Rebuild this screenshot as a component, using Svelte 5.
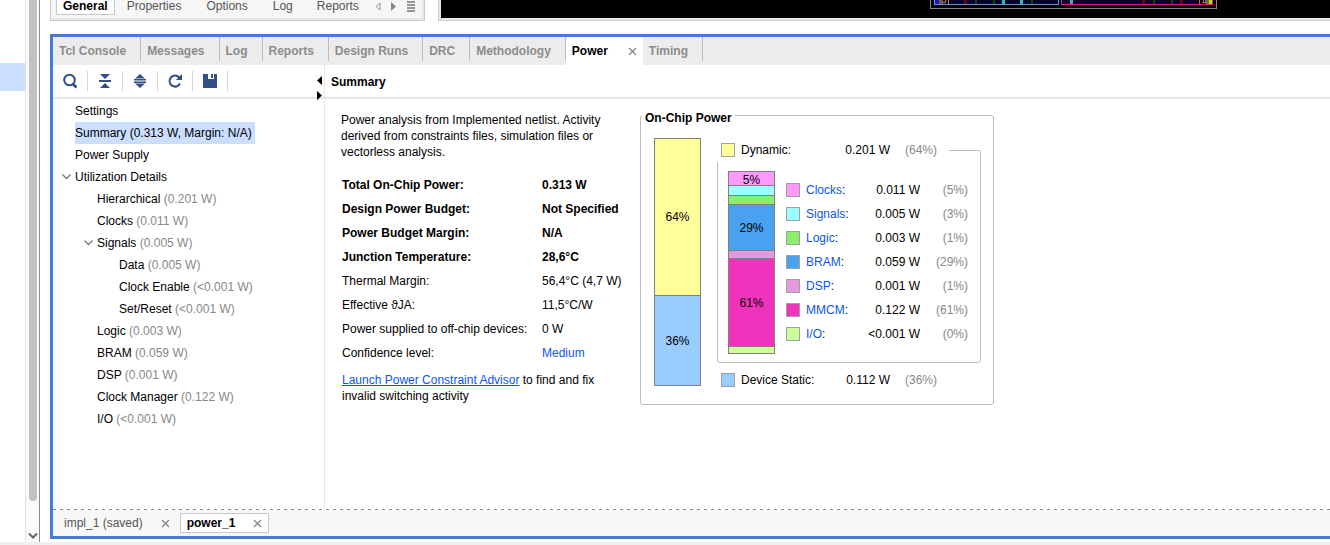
<script>
  const tabs = ['Tcl Console', 'Messages', 'Log', 'Reports', 'Design Runs', 'DRC', 'Methodology', 'Power', 'Timing'];
  const propTabs = ['Properties', 'Options', 'Log', 'Reports'];
  const tree = [
    { level: 0, name: 'Settings' },
    { level: 0, name: 'Summary (0.313 W, Margin: N/A)', selected: true },
    { level: 0, name: 'Power Supply' },
    { level: 0, name: 'Utilization Details', open: true },
    { level: 1, name: 'Hierarchical', value: '(0.201 W)' },
    { level: 1, name: 'Clocks', value: '(0.011 W)' },
    { level: 1, name: 'Signals', value: '(0.005 W)', open: true },
    { level: 2, name: 'Data', value: '(0.005 W)' },
    { level: 2, name: 'Clock Enable', value: '(<0.001 W)' },
    { level: 2, name: 'Set/Reset', value: '(<0.001 W)' },
    { level: 1, name: 'Logic', value: '(0.003 W)' },
    { level: 1, name: 'BRAM', value: '(0.059 W)' },
    { level: 1, name: 'DSP', value: '(0.001 W)' },
    { level: 1, name: 'Clock Manager', value: '(0.122 W)' },
    { level: 1, name: 'I/O', value: '(<0.001 W)' }
  ];
  const facts = [
    { label: 'Total On-Chip Power:', value: '0.313 W', bold: true },
    { label: 'Design Power Budget:', value: 'Not Specified', bold: true },
    { label: 'Power Budget Margin:', value: 'N/A', bold: true },
    { label: 'Junction Temperature:', value: '28,6°C', bold: true },
    { label: 'Thermal Margin:', value: '56,4°C (4,7 W)' },
    { label: 'Effective ϑJA:', value: '11,5°C/W' },
    { label: 'Power supplied to off-chip devices:', value: '0 W' },
    { label: 'Confidence level:', value: 'Medium', link: true }
  ];
  const totals = [
    { color: '#ffff99', label: '64%', size: 157 },
    { color: '#99ccff', label: '36%', size: 90 }
  ];
  const parts = [
    { name: 'Clocks', color: '#ff99ff', value: '0.011 W', pct: '(5%)', label: '5%', size: 14 },
    { name: 'Signals', color: '#99ffff', value: '0.005 W', pct: '(3%)', size: 10 },
    { name: 'Logic', color: '#8af06c', value: '0.003 W', pct: '(1%)', size: 9 },
    { name: 'BRAM', color: '#48a2f0', value: '0.059 W', pct: '(29%)', label: '29%', size: 46 },
    { name: 'DSP', color: '#e699dc', value: '0.001 W', pct: '(1%)', size: 8 },
    { name: 'MMCM', color: '#f033bd', value: '0.122 W', pct: '(61%)', label: '61%', size: 88 },
    { name: 'I/O', color: '#ccff99', value: '<0.001 W', pct: '(0%)', size: 7 }
  ];
</script>

{#snippet cross()}
  <svg width="9" height="9" viewBox="0 0 9 9"><path d="M1 1 8 8M8 1 1 8" stroke="#858585" stroke-width="1.3" fill="none" /></svg>
{/snippet}

<div class="page">
  <div class="work">
    <aside class="strip">
      <div class="strip-body"><div class="strip-row"></div></div>
      <div class="scroll">
        <div class="thumb"></div>
        <svg width="10" height="8" viewBox="0 0 10 8"><path d="M1 1.5 5 5.5 9 1.5" stroke="#666" stroke-width="2" fill="none" /></svg>
      </div>
    </aside>

    <main>
      <div class="upper">
        <nav class="props">
          <button class="prop active">General</button>
          {#each propTabs as t}<button class="prop">{t}</button>{/each}
          <span class="pager">
            <button aria-label="Previous"><svg width="6" height="9" viewBox="0 0 6 9"><path d="M5 1v7L1 4.500z" fill="none" stroke="#999" /></svg></button>
            <button aria-label="Next"><svg width="6" height="9" viewBox="0 0 6 9"><path d="M0 0v9L5 4.500z" fill="#858585" /></svg></button>
            <button aria-label="List"><svg width="8" height="11" viewBox="0 0 8 11"><path d="M0 1h8M0 4h8M0 7h8M0 10h8" stroke="#777" stroke-width="1.300" /></svg></button>
          </span>
        </nav>
        <div class="device">
          <svg width="290" height="9" viewBox="0 0 290 9" shape-rendering="crispEdges">
            <path d="M.5 0V8.500H286.500V0" fill="none" stroke="#888" />
            <path d="M4 0H129V5H4zM131 0H283V5H131z" fill="#04042c" />
            <path d="M5 0h4v4H5z" fill="#1818c8" /><path d="M9 0h4v4H9z" fill="#6b5848" />
            <path d="M12 2.500h3.500V0M18.500 0v4M269.500 0v4M273 2.500V0M272 2.500h3" fill="none" stroke="#b87820" />
            <path d="M34 0h3v4h-3zM212 0h3v4h-3zM250 0h3v4h-3z" fill="#5a0c1c" />
            <path d="M45 0h2v4h-2zM63 0h2v4h-2zM101 0h2v4h-2zM223 0h2v4h-2zM241 0h2v4h-2z" fill="#064a10" />
            <path d="M72 0h3v4h-3zM90 0h3v4h-3zM140 0h3v4h-3z" fill="#30b8c0" />
            <path d="M275 0h4v4h-4z" fill="#786838" /><path d="M279 0h3v4h-3z" fill="#90f020" />
            <path d="M4.500 0V4.500H128.500V0" fill="none" stroke="#6c8cd8" />
            <path d="M131.500 0V4.500H282.500V0" fill="none" stroke="#d8189c" />
          </svg>
        </div>
      </div>

      <section class="panel">
        <nav class="tabs">
          {#each tabs as t}
            <div class="tab" class:active={t === 'Power'}>
              <button>{t}</button>
              {#if t === 'Power'}<button class="close" aria-label="Close Power">{@render cross()}</button>{/if}
            </div>
          {/each}
        </nav>

        <div class="columns">
          <div class="side">
            <div class="tools">
              <button aria-label="Search"><svg width="16" height="16" viewBox="0 0 16 16"><circle cx="7.500" cy="7" r="5.300" fill="none" stroke="#324f86" stroke-width="2" /><path d="m11 11 3.500 3.500" stroke="#324f86" stroke-width="2.600" /></svg></button>
              <button aria-label="Collapse all"><svg width="16" height="16" viewBox="0 0 16 16"><path d="M3 1h10L8 6zM3 15h10L8 10zM2 7h12v2H2z" fill="#324f86" /></svg></button>
              <button aria-label="Expand all"><svg width="16" height="16" viewBox="0 0 16 16"><path d="M3 5.500 8 1l5 4.500zM3 10.500 8 15l5-4.500zM2 6h12v1.500H2zM2 8.500h12V10H2z" fill="#324f86" /></svg></button>
              <button aria-label="Refresh"><svg width="16" height="16" viewBox="0 0 16 16"><path d="M12.200 4.500A5.500 5.500 0 1 0 13 10.500" fill="none" stroke="#324f86" stroke-width="2" /><path d="M15 1v6H9z" fill="#324f86" /></svg></button>
              <button aria-label="Save"><svg width="16" height="16" viewBox="0 0 16 16"><path d="M1 1h5v5h6V1h3v14H1zM9 1h2v4H9z" fill="#324f86" /></svg></button>
              <div class="split">
                <svg width="6" height="24" viewBox="0 0 6 24"><path d="M5 0v9L0 4.500zM0 15v9l5-4.500z" fill="#000" /></svg>
              </div>
            </div>
            <ul class="tree">
              {#each tree as n}
                <li class="l{n.level}">
                  <span class="twist">{#if n.open}<svg width="9" height="6" viewBox="0 0 9 6"><path d="M.5.5l4 4 4-4" fill="none" stroke="#777" stroke-width="1.300" /></svg>{/if}</span>
                  <button class:selected={n.selected}>{n.name}{#if n.value}{' '}<span class="dim">{n.value}</span>{/if}</button>
                </li>
              {/each}
            </ul>
          </div>

          <div class="content">
            <h2>Summary</h2>
            <div class="report">
              <div class="text">
                <p>Power analysis from Implemented netlist. Activity derived from constraints files, simulation files or vectorless analysis.</p>
                <table class="facts">
                  <tbody>
                    {#each facts as f}
                      <tr class:bold={f.bold}><th scope="row">{f.label}</th><td>{#if f.link}<a class="plain" href="#confidence">{f.value}</a>{:else}{f.value}{/if}</td></tr>
                    {/each}
                  </tbody>
                </table>
                <p class="advice"><a href="#advisor">Launch Power Constraint Advisor</a> to find and fix<br />invalid switching activity</p>
              </div>

              <fieldset class="chip">
                <legend>On-Chip Power</legend>
                <div class="bar">
                  {#each totals as s}<div style="height:{s.size}px;background:{s.color}">{s.label}</div>{/each}
                </div>
                <div class="detail">
                  <fieldset class="dynamic">
                    <legend class="total"><i class="swatch" style="background:#ffff99"></i><span>Dynamic:</span><b>0.201 W</b><em>(64%)</em></legend>
                    <div class="bar">
                      {#each parts as s}<div style="height:{s.size}px;background:{s.color}">{s.label ?? ''}</div>{/each}
                    </div>
                    <table class="parts">
                      <tbody>
                        {#each parts as s}
                          <tr>
                            <td><i class="swatch" style="background:{s.color}"></i></td>
                            <th scope="row"><a class="plain" href="#{s.name}">{s.name}</a>:</th>
                            <td class="num">{s.value}</td>
                            <td class="pct">{s.pct}</td>
                          </tr>
                        {/each}
                      </tbody>
                    </table>
                  </fieldset>
                  <div class="total static"><i class="swatch" style="background:#99ccff"></i><span>Device Static:</span><b>0.112 W</b><em>(36%)</em></div>
                </div>
              </fieldset>
            </div>
          </div>
        </div>

        <svg class="dash" width="100%" height="1"><line x1="0" y1=".5" x2="100%" y2=".5" stroke="#888" stroke-dasharray="3 4" /></svg>
        <nav class="results">
          <div class="result"><button>impl_1 (saved)</button><button class="close" aria-label="Close impl_1">{@render cross()}</button></div>
          <div class="result active"><button>power_1</button><button class="close" aria-label="Close power_1">{@render cross()}</button></div>
        </nav>
      </section>
    </main>
  </div>
  <footer></footer>
</div>

<style>
  :global(body) { font: 12px/16px "Liberation Sans", Arial, sans-serif; color: #000; background: #fff; }
  .page, .page * { box-sizing: border-box; }
  .page { min-height: 100vh; display: flex; flex-direction: column; overflow: hidden; }
  button { font: inherit; color: inherit; background: none; border: 0; padding: 0; margin: 0; white-space: nowrap; }
  svg { display: block; flex: none; }
  p, h2, ul { margin: 0; padding: 0; }
  a { color: #0b55f0; }
  a.plain { text-decoration: none; }
  footer { height: 3px; background: #efefef; }
  .work { flex: 1; display: flex; }

  .strip { flex: none; width: 40px; display: flex; border-right: 1px solid #8c8c8c; }
  .strip-body { flex: 1; padding-top: 63px; }
  .strip-row { height: 28px; background: #ccdeff; }
  .scroll { width: 14px; border-left: 1px solid #e3e3e3; background: #fafafa; display: flex; flex-direction: column; align-items: center; padding-bottom: 2px; }
  .thumb { flex: 1; width: 8px; margin-bottom: 31px; background: #c1c1c1; border-radius: 0 0 4px 4px; }

  main { flex: 1; min-width: 0; display: flex; flex-direction: column; padding: 0 0 3px 10px; }
  .upper { display: flex; gap: 13px; height: 21px; margin-bottom: 13px; }
  .props { flex: none; width: 375px; display: flex; align-items: flex-start; color: #555; background: #f6f6f6; border: solid #cbcbcb; border-width: 0 1px 1px; box-shadow: inset -2px -2px #e8e8e8; padding-left: 5px; }
  .prop { height: 15px; line-height: 10px; padding: 0 12px 3px; }
  .prop.active { color: #000; font-weight: bold; background: #fff; border: solid #c8c8c8; border-width: 0 1px 1px; padding: 0 6px 2px; }
  .prop:nth-child(3) { padding: 0 13px 3px; }
  .pager { display: flex; align-items: center; gap: 10px; height: 12px; padding-left: 4px; }
  .device { flex: 1; display: flex; justify-content: flex-end; background: #000; border: solid #cbcbcb; border-width: 0 0 1px 1px; box-shadow: inset 2px -2px #e8e8e8; padding-right: 110px; }

  .panel { flex: 1; display: flex; flex-direction: column; border: solid #477dd0; border-width: 3px 0 3px 3px; }
  .tabs { display: flex; height: 28px; background: #ececec; font-weight: bold; color: #8c8c8c; }
  .tab { display: flex; align-items: center; height: 24px; padding: 4px 14px 0 6px; border-right: 1px solid #bcbcbc; }
  .tab.active { height: 28px; padding: 0 6px; gap: 20px; background: #fff; color: #000; border: 0; }
  .columns { flex: 1; display: flex; }
  .side { flex: none; width: 272px; border-right: 1px solid #e6e6e6; }
  .tools { display: flex; align-items: center; height: 34px; border-bottom: 2px solid #e6e6e6; }
  .tools button { width: 35px; height: 20px; display: grid; place-items: center; border-right: 1px solid #d6d6d6; }
  .split { flex: 1; align-self: flex-start; display: flex; align-items: flex-start; justify-content: flex-end; height: 32px; padding: 11px 1px 0 0; }
  .tree { list-style: none; padding-top: 1px; }
  li { display: flex; height: 22px; line-height: 22px; padding-left: 9px; }
  li.l1 { padding-left: 31px; }
  li.l2 { padding-left: 53px; }
  li button { padding-right: 3px; }
  li button.selected { background: #ccdeff; }
  .twist { width: 13px; display: flex; align-items: center; }
  .dim { color: #888; }

  .content { flex: 1; min-width: 0; }
  h2 { font-size: 12px; line-height: 34px; height: 34px; padding-left: 6px; border-bottom: 2px solid #e6e6e6; }
  .report { display: flex; align-items: flex-start; padding: 13px 16px; gap: 9px; }
  .text { width: 290px; }
  .text p { max-width: 280px; }
  .facts { border-spacing: 0; margin: 13px 0 7px 1px; }
  .facts th, .facts td { height: 24px; padding: 0; text-align: left; font-weight: normal; white-space: nowrap; }
  .facts th { width: 200px; }
  .facts .bold th, .facts .bold td { font-weight: bold; }
  .text .advice { padding-left: 1px; }

  fieldset { margin: 0; min-width: 0; border: 1px solid #bcbcbc; border-radius: 3px; padding: 0; display: flex; }
  .chip { padding: 12px 12px 12px 13px; gap: 16px; margin-top: -8px; }
  .chip > legend { font-weight: bold; padding: 6px 3px 0; margin-left: -12px; }
  .bar { flex: none; width: 47px; border: solid #808080; border-width: 1px 1px 0; align-self: flex-start; }
  .bar div { border-bottom: 1px solid #808080; display: grid; place-items: center; overflow: hidden; }
  .dynamic { width: 264px; padding: 9px 12px 8px 10px; gap: 11px; }
  .total { display: flex; align-items: center; width: 232px; height: 24px; padding-left: 4px; background: #fff; }
  .dynamic legend { margin-left: -11px; }
  .total span { width: 95px; padding-left: 6px; }
  .total b { width: 60px; text-align: right; font-weight: normal; }
  .total em { font-style: normal; color: #888; padding-left: 15px; }
  .static { margin-top: 5px; }
  .swatch { display: block; flex: none; width: 14px; height: 14px; border: 1px solid #a0a0a0; }
  .parts { align-self: flex-start; border-spacing: 0; margin-top: 7px; }
  .parts th, .parts td { height: 24px; padding: 0; font-weight: normal; text-align: left; white-space: nowrap; }
  .parts th { width: 60px; padding-left: 6px; }
  .parts .num { width: 60px; text-align: right; }
  .parts .pct { width: 48px; text-align: right; color: #888; }

  .results { display: flex; align-items: center; height: 26px; background: #f7f7f7; padding-left: 11px; gap: 10px; }
  .result { display: flex; align-items: center; height: 20px; gap: 18px; color: #555; }
  .result.active { color: #000; font-weight: bold; background: #fff; border: 1px solid #c8c8c8; padding: 0 6px; }
</style>
